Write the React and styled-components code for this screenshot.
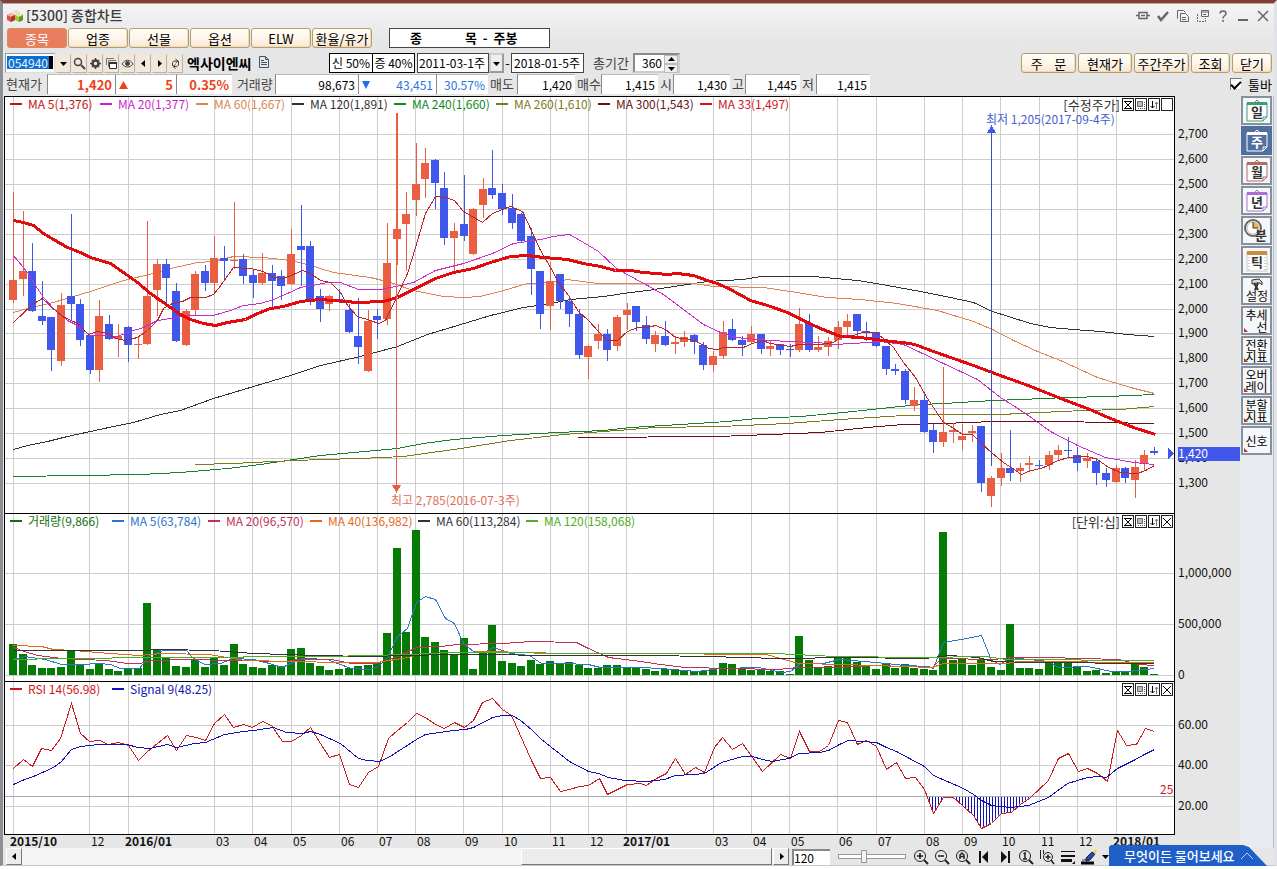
import React from 'react';
import styled, { createGlobalStyle, css } from 'styled-components';

/* ---------- data ---------- */

const FIRST_X = 13;
const LAST_X = 1154;
const COUNT = 120;
const candleX = (i) => Math.round(FIRST_X + (i * (LAST_X - FIRST_X)) / (COUNT - 1));

const UP = '#ea5f42';
const DOWN = '#3f57ea';
const GRID = '#cdcdcd';

/* direction, body top, body bottom, wick top, wick bottom */
const CANDLES = `u280,300,192,302 u271,279,211,295 d271,311,243,311 d316,321,281,324 d317,350,317,370 u305,361,293,365
d296,304,214,320 d304,340,299,345 d335,370,335,373 u316,370,300,381 d324,339,315,339 u336,339,324,356 d327,345,326,361
u344,345,336,358 u296,344,221,344 u264,290,259,315 d264,278,259,302 d291,341,283,341 u311,345,309,345 u274,310,271,315
d271,283,265,290 u258,283,236,292 d258,261,246,280 u260,261,202,268 d259,276,254,283 d275,283,270,297 u273,283,253,284
d273,281,265,308 d276,286,270,299 u254,284,229,284 d246,250,205,285 d246,299,241,304 d296,309,289,321 u296,304,295,310
d299,300,289,302 d310,332,304,332 d336,347,298,363 u321,371,310,371 d316,320,309,338 u263,319,223,324 u229,239,113,264
u214,224,192,270 u184,200,143,215 u163,179,148,197 d160,183,159,208 d188,238,172,244 u231,238,223,270 d224,236,175,240
u209,254,208,254 u189,205,178,217 d188,195,150,198 d193,209,184,214 d208,223,194,228 d214,241,213,241 d236,269,228,294
d271,314,271,328 u281,306,262,329 d274,301,274,308 d301,314,296,326 d314,355,309,358 u346,357,345,378 u334,341,324,348
d334,350,329,360 u317,346,315,350 u310,315,303,329 d306,322,306,330 d325,339,316,343 u335,344,331,351 d336,345,321,345
u342,344,336,353 u337,342,331,346 d335,342,334,353 d345,365,342,369 u356,365,351,371 u332,356,321,358 d329,340,319,340
d340,345,336,355 u334,342,326,342 d334,349,334,353 u346,349,340,355 d344,350,344,354 d349,350,344,356 u324,350,308,351
d323,350,314,351 u347,350,336,351 u341,347,337,355 u327,340,321,348 u321,327,314,334 d314,331,314,335 d331,332,322,340
d332,346,332,346 d346,369,346,374 d369,371,364,374 d371,400,369,403 u400,406,387,410 d400,432,392,432 d430,442,424,452
u432,442,367,446 u430,432,423,442 u436,440,424,449 u431,433,425,441 d426,483,426,491 u478,496,476,506 u468,478,453,485
d468,473,430,480 u468,471,463,481 u463,465,456,470 d465,466,460,468 u455,465,451,469 u450,455,445,460 d450,451,437,457
d455,463,447,470 u458,461,453,467 d461,473,458,484 d473,480,468,486 u468,482,465,482 d468,478,467,482 u467,480,460,497
u455,463,450,469 d451,453,447,454`
  .split(/\s+/)
  .map((t) => [t[0] === 'u', ...t.slice(1).split(',').map(Number)]);

const VOLUME_TOPS = [
  644, 654, 665, 668, 668, 667, 650, 665, 669, 664, 669, 671, 669, 668, 603, 650, 658, 666, 667, 660, 667, 657, 665, 644,
  664, 667, 668, 665, 666, 649, 648, 663, 666, 670, 669, 668, 666, 665, 662, 633, 548, 632, 530, 637, 642, 650, 654, 638,
  669, 653, 625, 661, 663, 666, 660, 664, 661, 664, 662, 665, 668, 668, 665, 665, 668, 668, 669, 671, 669, 669, 671, 671,
  671, 669, 663, 664, 669, 670, 670, 671, 671, 674, 636, 660, 668, 666, 657, 656, 662, 666, 669, 663, 668, 664, 668, 669,
  670, 532, 660, 659, 665, 659, 667, 670, 624, 668, 668, 669, 662, 663, 662, 667, 671, 670, 673, 671, 671, 662, 667, 674,
];

const PRICE_LINES = [
  {
    color: '#187f2a',
    points:
      '13,476 80,475 140,474 180,472 227,468 260,464 293,459 320,455 353,452 397,448 423,443 453,439 503,435 557,432 603,430 630,427 680,424 727,421 757,418 800,416 843,412 890,407 920,404 943,403 993,400 1020,399 1067,397 1107,396 1154,394',
  },
  {
    color: '#7d7a1a',
    points:
      '195,464 233,463 273,461 320,459 360,458 403,456 460,448 510,440 563,434 630,429 653,427 720,426 787,423 840,419 903,415 940,414 960,414 1000,414 1040,412 1083,410 1120,409 1154,406',
  },
  {
    color: '#6d0f14',
    points:
      '578,437 717,436 770,434 820,432 867,427 903,424 943,423 993,421 1067,421 1100,422 1154,423',
  },
  {
    color: '#333333',
    points:
      '13,449 27,445 47,441 67,436 90,431 113,426 133,422 160,414 180,410 213,398 253,386 290,375 320,365 360,356 397,346 427,334 457,325 490,315 523,307 550,303 570,299 603,296 630,292 647,290 687,284 707,281 743,279 760,276 813,276 857,280 887,285 920,291 950,297 973,302 992,311 1030,323 1050,327 1073,329 1100,331 1127,334 1154,336',
  },
  {
    color: '#dd8452',
    points:
      '13,312 27,308 53,302 90,291 123,280 153,273 170,268 197,262 213,261 233,256 263,257 290,260 307,264 320,268 333,272 370,277 390,282 413,290 423,292 443,296 463,297 480,296 503,290 527,283 550,282 567,279 597,283 630,283 693,283 713,286 763,287 790,291 827,297 860,299 897,303 937,310 973,321 992,329 1013,340 1037,351 1060,360 1097,377 1130,387 1154,393',
  },
  {
    color: '#cc2bcc',
    points:
      '13,255 27,272 35,285 43,297 53,308 67,320 77,325 90,335 103,335 117,336 130,331 143,327 157,320 170,318 190,315 213,315 230,310 243,305 260,303 273,299 287,293 300,287 317,284 327,282 340,282 358,289 380,289 400,285 413,282 435,270 463,263 492,253 513,243 540,239 553,236 569,234 583,242 598,251 615,267 623,272 647,285 663,294 683,309 703,324 720,332 735,337 757,339 787,341 817,342 833,344 853,343 880,341 903,344 920,352 943,363 977,379 1000,397 1025,413 1050,431 1077,445 1105,457 1133,462 1154,464',
  },
  {
    color: '#e3090d',
    width: 3,
    points:
      '13,220 23,222 33,225 43,233 53,239 67,247 80,252 90,257 110,263 123,272 137,282 150,293 170,307 180,314 190,319 203,323 215,325 227,322 245,319 257,313 270,308 283,306 300,301 320,299 333,300 357,302 383,301 397,297 413,289 435,278 453,272 473,268 490,262 510,256 527,255 543,257 567,259 583,263 600,266 615,270 630,270 643,272 667,274 677,273 693,275 707,280 717,283 730,289 750,300 767,305 787,312 807,322 820,328 840,336 860,337 883,340 910,343 917,345 933,351 973,365 997,374 1033,387 1060,398 1087,408 1110,418 1133,427 1155,434',
  },
  {
    color: '#bb2326',
    points:
      '13,322 32,304 42,298 50,306 62,316 75,322 80,326 88,334 97,331 107,333 115,338 125,340 137,337 147,330 157,320 163,308 172,303 182,301 190,297 205,297 213,294 218,288 233,267 250,268 263,271 273,277 283,278 293,274 302,270 310,273 320,280 330,282 340,292 347,305 357,316 370,320 378,323 385,320 397,295 407,273 415,247 425,213 435,196 445,197 454,200 463,211 470,215 482,222 492,213 502,209 510,206 522,211 530,228 540,250 550,267 558,282 568,295 578,311 588,320 598,331 607,340 617,340 627,331 637,327 647,327 655,325 665,329 675,337 690,339 698,342 708,348 717,349 723,347 743,347 752,343 762,340 770,343 790,346 798,344 820,344 833,342 842,335 853,335 862,332 875,332 883,338 893,347 903,362 915,377 927,398 935,410 943,422 952,427 962,434 972,434 980,442 992,453 1003,462 1012,468 1021,474 1028,471 1043,467 1058,460 1068,457 1087,456 1097,459 1108,467 1120,472 1137,473 1145,470 1154,465',
  },
];

const VOLUME_LINES = [
  {
    color: '#2a74cc',
    points:
      '13,659 24,656 45,659 61,664 82,664 98,663 110,664 120,668 139,668 149,655 163,650 186,650 192,657 204,664 220,663 233,658 253,659 269,663 282,667 298,659 327,659 337,663 351,668 369,669 378,666 387,657 397,636 407,628 416,602 425,596 435,599 445,618 454,623 463,643 473,651 484,652 493,647 510,653 529,655 541,663 563,663 588,664 600,667 640,667 660,668 697,671 721,668 758,667 782,672 790,671 800,663 823,663 839,659 876,662 904,665 928,666 933,668 943,642 961,639 981,635 991,660 1000,664 1010,657 1028,659 1048,661 1058,667 1087,666 1111,671 1128,671 1154,668',
  },
  {
    color: '#c22f58',
    points:
      '13,647 24,651 37,655 61,658 106,660 127,663 139,663 153,660 184,659 286,661 302,658 331,659 351,663 376,663 392,658 404,653 416,647 441,646 457,644 502,643 531,641 576,642 588,648 608,657 640,661 660,664 685,667 778,669 798,667 835,667 876,665 932,667 941,658 993,659 1010,657 1046,657 1119,659 1138,664 1154,665',
  },
  {
    color: '#e5691b',
    points:
      '13,645 41,646 53,649 73,650 110,653 139,655 163,653 208,654 245,660 339,662 376,662 408,657 420,653 494,651 547,653 640,653 766,654 798,663 843,664 932,667 943,663 1006,663 1018,661 1154,662',
  },
  {
    color: '#333333',
    points:
      '13,650 139,650 163,649 212,650 253,653 318,655 367,656 449,654 584,655 640,655 717,656 733,657 786,658 843,657 924,658 949,655 977,657 993,661 1034,662 1154,663',
  },
  {
    color: '#4cae22',
    points: '13,659 61,658 163,657 327,656 408,654 449,652 640,653 774,653 835,656 920,657 985,656 1006,659 1154,660',
  },
];

const RSI_POINTS =
  '13,768 23,759 32,766 41,748 51,750 60,738 71,703 80,733 89,741 99,740 108,744 118,742 128,745 138,760 147,751 157,743 167,735 176,750 186,735 196,737 205,740 214,723 224,714 233,727 243,724 252,727 262,721 271,725 282,741 291,741 301,735 310,727 320,743 329,757 339,754 349,784 358,787 368,772 378,766 388,738 397,730 407,722 416,713 425,717 435,724 444,728 454,722 464,727 473,720 482,702 492,698 502,709 511,715 531,760 540,778 550,777 560,791 569,789 579,786 588,785 599,778 607,794 627,784 640,783 646,785 656,778 666,773 675,758 685,774 695,767 704,772 714,747 722,737 732,749 742,743 752,757 762,771 780,754 790,758 799,731 809,751 819,751 828,745 838,720 847,722 857,744 866,740 876,746 886,769 896,762 905,778 915,777 924,789 933,813 943,797 953,797 963,806 973,815 981,828 991,823 1001,813 1011,812 1020,804 1029,798 1048,780 1058,758 1068,753 1078,771 1087,768 1097,773 1107,781 1117,730 1126,745 1136,744 1145,728 1154,731';
const SIGNAL_POINTS =
  '13,784 24,779 33,776 53,767 61,761 71,749 80,746 98,744 127,744 137,747 149,748 167,744 176,747 194,743 205,742 224,734 243,731 253,730 273,727 286,732 302,733 310,731 320,734 331,739 340,743 358,758 367,760 379,761 388,757 416,739 425,734 453,730 465,729 473,727 492,717 502,715 512,715 520,720 531,729 541,739 569,761 588,771 598,773 608,777 624,780 646,781 664,779 675,775 693,774 704,773 721,762 742,756 752,756 762,759 772,761 788,758 799,753 819,752 828,750 839,744 848,740 876,742 886,747 896,751 924,766 933,775 963,788 973,794 981,800 991,805 1010,807 1028,805 1048,797 1067,783 1087,777 1099,776 1106,777 1117,768 1135,759 1144,754 1154,749';
const OVERSOLD_POINTS =
  '928,797 933,813 943,798 953,798 963,806 973,815 981,828 991,823 1001,813 1011,812 1020,804 1031,797';
const OVERSOLD_BARS = Array.from({ length: 34 }, (_, k) => 929 + k * 3);

const MONTHS = [
  [13, '2015/10', true], [89, '12'], [128, '2016/01', true], [214, '03'], [252, '04'], [291, '05'], [339, '06'],
  [377, '07'], [415, '08'], [463, '09'], [502, '10'], [550, '11'], [588, '12'], [626, '2017/01', true], [713, '03'],
  [751, '04'], [789, '05'], [837, '06'], [876, '07'], [924, '08'], [962, '09'], [1000, '10'], [1039, '11'],
  [1077, '12'], [1116, '2018/01', true],
];

const PRICE_TICKS = Array.from({ length: 15 }, (_, k) => {
  const price = 2700 - k * 100;
  return [Math.round(134 + k * 24.93), price.toLocaleString('en-US')];
});

/* ---------- global ---------- */

const FONT = '"Noto Sans CJK KR", sans-serif';

const GlobalStyle = createGlobalStyle`
  * { box-sizing: border-box; }
  body { margin: 0; background: #fff; font: 13px/16px ${FONT}; color: #000; }
  button, input, select { font: inherit; color: inherit; margin: 0; padding: 0; border-radius: 0; }
  button { cursor: pointer; white-space: pre; }
`;

/* ---------- window frame ---------- */

const Window = styled.div`
  min-width: 1240px;
  background: linear-gradient(#f4f4f4, #e6e6e6 40px);
  border-top: 3px solid #7c3f45;
  border-left: 3px solid #8c8f94;
  border-right: 3px solid #dfe3e8;
  border-bottom: 1px solid #c4c9d0;
  box-shadow: inset 0 1px #c9a85c;
  padding-left: 1px;
  position: relative;
`;

const TitleBar = styled.header`
  display: flex;
  align-items: center;
  gap: 3px;
  height: 25px;
  padding: 1px 3px 0;
`;

const Title = styled.h1`
  margin: 0;
  flex: 1;
  font-size: 14px;
  font-weight: 500;
  line-height: 20px;
  padding-bottom: 3px;
  color: #3c3c3c;
`;

const TitleTools = styled.div`
  display: flex;
  gap: 4px;
`;

const IconButton = styled.button`
  display: flex;
  align-items: center;
  justify-content: center;
  width: 16px;
  height: 16px;
  border: 0;
  background: none;
  color: #666;
`;

/* ---------- toolbar rows ---------- */

const TabRow = styled.nav`
  display: flex;
  gap: 1px;
  height: 20px;
  padding-left: 3px;
`;

const creamFace = css`
  border: 1px solid #b29f6e;
  border-radius: 3px;
  background: linear-gradient(#fffdf9, #fdf6ea 50%, #f8e6d3);
  box-shadow: inset -1px -1px #f2d9b8;
  line-height: 17px;
`;

const Tab = styled.button`
  ${creamFace}
  width: 60px;
  ${(p) =>
    p.$active &&
    css`
      background: #e97d5f;
      border-color: #e08b4e;
      box-shadow: none;
      color: #fff;
    `}
`;

const ModeBox = styled.output`
  display: flex;
  width: 161px;
  margin-left: 16px;
  padding-left: 20px;
  border: 1px solid #444;
  background: #fff;
  font-weight: 700;
  line-height: 17px;
  white-space: pre;
  span:first-child {
    width: 55px;
  }
`;

const SearchRow = styled.div`
  display: flex;
  align-items: center;
  height: 20px;
  margin-top: 5px;
  padding-left: 1px;
`;

const CodeInput = styled.input`
  width: 50px;
  height: 20px;
  padding: 0 2px 2px;
  border: 1px solid #999;
  border-right-color: #ddd;
  border-bottom-color: #ddd;
  font-size: 12px;
  color: #e8f3ff;
  background:
    linear-gradient(#0a6fce, #0a6fce) 1px 2px / 42px 13px no-repeat,
    linear-gradient(#000, #000) 43px 2px / 4px 13px no-repeat,
    #fff;
`;

const ToolButton = styled.button`
  display: flex;
  align-items: center;
  justify-content: center;
  width: 15px;
  height: 19px;
  margin-left: 1px;
  border: 1px solid #bcb0a3;
  border-top-color: #f0e8df;
  border-left-color: #f0e8df;
  background: #f3e7da;
  color: #444;
`;

const StockName = styled.strong`
  width: 67px;
  margin-left: 4px;
  font-size: 14px;
  font-weight: 700;
  white-space: nowrap;
`;

const DocLink = styled.button`
  width: 20px;
  height: 18px;
  border: 0;
  background: none;
  color: #555;
`;

const RatePair = styled.div`
  display: flex;
  margin-left: 55px;
  border: 1px solid #000;
  background: #fff;
`;

const Rate = styled.output`
  width: 42px;
  height: 18px;
  font-size: 12px;
  line-height: 17px;
  text-align: center;
  white-space: nowrap;
  & + & {
    border-left: 1px solid #000;
  }
`;

const DateSelect = styled.label`
  position: relative;
  display: flex;
  width: 87px;
  height: 20px;
  margin-left: 2px;
  select {
    width: 72px;
    appearance: none;
    border: 1px solid #444;
    background: #fff;
    padding-left: 1px;
    font-size: 12px;
  }
  span {
    display: flex;
    align-items: center;
    justify-content: center;
    width: 15px;
    border: 2px solid #9a9a9a;
    border-top-color: #ccc;
    border-left-color: #ccc;
    background: #eee;
    pointer-events: none;
  }
`;

const DateInput = styled.input`
  width: 73px;
  height: 20px;
  border: 1px solid #444;
  background: #fff;
  padding: 0 0 1px 2px;
  font-size: 12px;
`;

const Dash = styled.span`
  width: 7px;
  text-align: center;
`;

const Spin = styled.label`
  display: flex;
  align-items: center;
  margin-left: 9px;
  color: #444;
  > span {
    width: 40px;
  }
`;

const SpinBox = styled.div`
  display: flex;
  width: 47px;
  height: 20px;
  border: 2px solid #8a8a8a;
  border-right-color: #ccc;
  border-bottom-color: #ccc;
  background: #fff;
  color: #000;
  input {
    width: 29px;
    border: 0;
    background: none;
    text-align: right;
    padding: 0 2px 1px 0;
    font-size: 12px;
  }
`;

const SpinArrows = styled.div`
  display: flex;
  flex-direction: column;
  button {
    flex: 1;
    width: 14px;
    border: 1px solid #bbb;
    background: #eee;
    display: flex;
    align-items: center;
    justify-content: center;
  }
`;

const Actions = styled.div`
  display: flex;
  gap: 2px;
  margin-left: auto;
  padding-right: 2px;
`;

const ActionButton = styled.button`
  ${creamFace}
  width: ${(p) => p.$w}px;
  height: 20px;
`;

/* ---------- quote row ---------- */

const QuoteRow = styled.div`
  display: flex;
  height: 20px;
  margin-top: 1px;
  line-height: 19px;
`;

const QuoteLabel = styled.span`
  width: ${(p) => p.$w}px;
  padding-left: 2px;
  color: #444;
  white-space: nowrap;
`;

const QuoteCell = styled.output`
  display: flex;
  align-items: center;
  justify-content: flex-end;
  width: ${(p) => p.$w}px;
  border-left: 1px solid #888;
  border-top: 1px solid #bbb;
  background: #fff;
  padding-right: 3px;
  font-size: ${(p) => (p.$bold ? 13 : 12)}px;
  font-weight: ${(p) => (p.$bold ? 700 : 400)};
  color: ${(p) => p.$c || '#000'};
  svg {
    margin: 0 auto 0 3px;
  }
`;

const BarToggle = styled.label`
  display: flex;
  align-items: center;
  gap: 6px;
  margin-left: auto;
  padding-right: 2px;
  input {
    appearance: none;
    width: 12px;
    height: 12px;
    border: 1px solid #777;
    border-right-color: #ddd;
    border-bottom-color: #ddd;
    background: #fff;
    display: grid;
    place-items: center;
  }
  input:checked::after {
    content: '';
    width: 4px;
    height: 8px;
    margin-bottom: 2px;
    border: solid #000;
    border-width: 0 2px 2px 0;
    transform: rotate(45deg);
  }
`;

/* ---------- charts ---------- */

const Body = styled.div`
  display: flex;
  margin-top: 2px;
`;

const Charts = styled.main`
  flex: 1;
  min-width: 0;
`;

const Panel = styled.section`
  position: relative;
  svg.plot {
    display: block;
    width: 100%;
    height: ${(p) => p.$h}px;
  }
`;

const Legend = styled.ul`
  position: absolute;
  top: 0;
  left: 6px;
  display: flex;
  margin: 0;
  padding: 0;
  list-style: none;
  font-size: 12px;
  line-height: 15px;
`;

const LegendItem = styled.li`
  display: flex;
  align-items: center;
  gap: 6px;
  width: ${(p) => p.$w}px;
  color: ${(p) => p.$c};
  white-space: pre;
  &::before {
    content: '';
    width: 12px;
    height: 2px;
    background: currentColor;
  }
`;

const PanelTools = styled.div`
  position: absolute;
  top: 2px;
  right: 67px;
  display: flex;
  gap: 1px;
  line-height: 13px;
  span {
    margin-right: 1px;
    color: #333;
  }
`;

const PanelButton = styled.button`
  display: flex;
  align-items: center;
  justify-content: center;
  width: 12px;
  height: 13px;
  border: 1px solid #222;
  background: #fff;
`;

const Axis = styled.svg`
  display: block;
  width: 100%;
  height: 13px;
  overflow: visible;
`;

const AxisText = styled.text`
  font: ${(p) => (p.$bold ? 700 : 400)} 12px ${FONT};
  fill: ${(p) => p.$c || '#111'};
`;

/* ---------- bottom row ---------- */

const BottomRow = styled.div`
  display: flex;
  align-items: center;
  height: 17px;
  padding-left: 2px;
`;

const ScrollTrack = styled.div`
  display: flex;
  flex: 1;
  height: 17px;
  background: #f5f5f5;
`;

const Bevel = styled.button`
  display: flex;
  align-items: center;
  justify-content: center;
  width: 16px;
  border: 1px solid #fff;
  border-right-color: #777;
  border-bottom-color: #777;
  background: #ececec;
`;

const TrackSpace = styled.div`
  flex: ${(p) => p.$f};
`;

const Thumb = styled(Bevel)`
  flex: 250;
`;

const CountInput = styled.input`
  width: 38px;
  height: 16px;
  margin-left: 3px;
  border: 2px solid #888;
  border-right: 0;
  border-bottom: 0;
  background: #fff;
  font-size: 12px;
  line-height: 14px;
`;

const Zoom = styled.input`
  appearance: none;
  width: 68px;
  height: 14px;
  margin-left: 8px;
  background: none;
  &::-webkit-slider-runnable-track {
    height: 5px;
    border: 1px solid #999;
    background: #fff;
  }
  &::-webkit-slider-thumb {
    appearance: none;
    width: 6px;
    height: 13px;
    margin-top: -5px;
    border: 1px solid #999;
    background: #f2f2f2;
  }
`;

const ZoomTools = styled.div`
  display: flex;
  align-items: center;
  gap: 5px;
  margin-left: 7px;
  width: 361px;
`;

/* ---------- sidebar ---------- */

const Sidebar = styled.aside`
  width: 34px;
  padding-left: 1px;
  background: #e8ebef;
  border-right: 1px solid #b9bec6;
`;

const SideButton = styled.button`
  position: relative;
  display: flex;
  align-items: center;
  justify-content: center;
  width: 31px;
  height: 29px;
  margin-bottom: 1px;
  border: 2px solid ${(p) => (p.$active ? '#4f6f9d' : '#87919d')};
  background: ${(p) => (p.$active ? '#52709f' : '#f6f7f8')};
  font-size: 12px;
  line-height: 12px;
  text-align: right;
  white-space: pre-line;
  ${(p) =>
    p.$corner &&
    css`
      &::after {
        content: '';
        position: absolute;
        left: 1px;
        bottom: 1px;
        border: 2px solid transparent;
        border-left-color: #a33;
        border-bottom-color: #a33;
      }
    `}
`;

const Banner = styled.button`
  position: absolute;
  right: 6px;
  bottom: -2px;
  display: flex;
  align-items: center;
  gap: 5px;
  width: 159px;
  height: 22px;
  padding-left: 15px;
  border: 0;
  background: #1f60c8;
  clip-path: polygon(0 2px, 2px 0, 134px 0, 140px 2px, 100% 100%, 0 100%);
  color: #fff;
  font-weight: 500;
`;

/* ---------- icons ---------- */

const Glyph = ({ size = 14, children, ...rest }) => (
  <svg width={size} height={size} viewBox={`0 0 ${size} ${size}`} fill="none" stroke="currentColor" aria-hidden="true" {...rest}>
    {children}
  </svg>
);

const Triangle = ({ dir, color = '#000' }) => {
  const shapes = {
    down: 'M0 2h7L3.5 6z',
    up: 'M0 5h7L3.5 1z',
    left: 'M5 0v7L1 3.5z',
    right: 'M2 0v7l4-3.5z',
  };
  return (
    <svg width="7" height="7" viewBox="0 0 7 7" aria-hidden="true">
      <path d={shapes[dir]} fill={color} />
    </svg>
  );
};

const Logo = () => (
  <svg width="16" height="14" viewBox="0 0 16 14" aria-hidden="true">
    <path d="M5 3l4-2 4 2-4 2z" fill="#f2d9c9" />
    <path d="M0 6l4-2 4 2v5l-4 2-4-2z" fill="#e0504a" />
    <path d="M0 6l4-2 4 2-4 2z" fill="#f6b7b0" />
    <path d="M4 8l4-2v5l-4 2z" fill="#b92f33" />
    <path d="M8 6l4-2 4 2v5l-4 2-4-2z" fill="#9dc83a" />
    <path d="M8 6l4-2 4 2-4 2z" fill="#dcefb0" />
    <path d="M12 8l4-2v5l-4 2z" fill="#5c9927" />
  </svg>
);

const Magnifier = ({ children }) => (
  <Glyph size={16}>
    <circle cx="7" cy="7" r="5.5" stroke="#222" />
    <path d="M11 11l4 4" stroke="#222" strokeWidth="2" />
    {children}
  </Glyph>
);

const CalendarIcon = ({ color, label, active }) => (
  <svg width="24" height="24" viewBox="0 0 24 24" aria-hidden="true">
    <path d="M2 4h20v14l-4 4H2z" fill={active ? '#52709f' : '#fff'} stroke={color} />
    <path d="M2 3h20v3H2z" fill={color} />
    <path d="M10 3l2-2 2 2" fill="none" stroke={color} />
    <path d="M22 18h-4v4" fill="none" stroke={color} />
    <text x="12" y="18" textAnchor="middle" fontSize="13" fontWeight="700" fill={active ? '#fff' : '#333'} fontFamily={FONT}>
      {label}
    </text>
  </svg>
);

const ClockIcon = () => (
  <svg width="27" height="25" viewBox="0 0 27 25" aria-hidden="true">
    <circle cx="10" cy="10" r="8" fill="#fff" stroke="#666" strokeWidth="2" />
    <circle cx="10" cy="10" r="6" fill="none" stroke="#bbb" />
    <path d="M10 10V4a6 6 0 0 1 6 6z" fill="#eeb44f" />
    <path d="M10 4v6h5" fill="none" stroke="#333" />
    <text x="18" y="22" textAnchor="middle" fontSize="13" fontWeight="700" fill="#333" fontFamily={FONT}>
      분
    </text>
  </svg>
);

const TickIcon = () => (
  <svg width="24" height="24" viewBox="0 0 24 24" aria-hidden="true">
    <path d="M2 3h20v19H2z" fill="#fff" stroke="#c9c9c9" />
    <path d="M2 2h20v4H2z" fill="#d08d41" />
    <path d="M4 8v13M20 8v13" stroke="#999" strokeDasharray="1 2" />
    <text x="12" y="18" textAnchor="middle" fontSize="13" fontWeight="700" fill="#333" fontFamily={FONT}>
      틱
    </text>
  </svg>
);

const HammerIcon = () => (
  <svg width="26" height="25" viewBox="0 0 26 25" aria-hidden="true">
    <path d="M8 2l7-1 3 3v3l-2-2h-3l-5 1z" fill="#ddd" stroke="#333" />
    <path d="M10 5l4 7M14 5l-3 7" stroke="#333" strokeWidth="2" />
    <text x="13" y="23" textAnchor="middle" fontSize="12" fill="#111" fontFamily={FONT}>
      설정
    </text>
  </svg>
);

/* ---------- chart pieces ---------- */

const Verticals = ({ top, bottom }) =>
  MONTHS.map(([x]) => <rect key={x} x={x} y={top} width="1" height={bottom - top} fill={GRID} />);

const Horizontals = ({ ys }) => ys.map((y) => <rect key={y} x="5" y={y} width="1169" height="1" fill={GRID} />);

const Lines = ({ items }) =>
  items.map((l, i) => (
    <polyline key={i} points={l.points} fill="none" stroke={l.color} strokeWidth={l.width || 1} transform="translate(0.5 0.5)" />
  ));

const Frame = ({ top, height }) => (
  <>
    <rect x="4" y={top} width="1171" height={height} fill="#fff" />
    <path d={`M4.5 ${top + height}V${top + 0.5}H1174.5V${top + height}`} fill="none" stroke="#000" />
  </>
);

const Plot = ({ top, height, children }) => (
  <svg
    className="plot"
    viewBox={`4 ${top} 1236 ${height}`}
    preserveAspectRatio="none"
    shapeRendering="crispEdges"
  >
    {children}
  </svg>
);

const Tools = ({ label, last = true }) => (
  <PanelTools>
    {label && <span>{label}</span>}
    <PanelButton aria-label="압축">
      <Glyph size={10}>
        <path d="M1 1.5h8M1 8.5h8M2 2l3 3 3-3M2 8l3-3 3 3" />
      </Glyph>
    </PanelButton>
    <PanelButton aria-label="최대화">
      <Glyph size={10}>
        <path d="M1.5 1.5h5v5h-5z" fill="#bbb" stroke="#666" />
        <path d="M8.5 2v7M2 8.5h7" stroke="#555" strokeDasharray="1 1" />
      </Glyph>
    </PanelButton>
    <PanelButton aria-label="이동">
      <Glyph size={10}>
        <path d="M3.5 1v7M1.5 6l2 2 2-2" />
        <path d="M7.5 9V2M6 4l1.5-2L9 4" stroke="#777" />
      </Glyph>
    </PanelButton>
    <PanelButton aria-label="닫기">
      {last && (
        <Glyph size={10}>
          <path d="M1 1l8 8M9 1L1 9" />
        </Glyph>
      )}
    </PanelButton>
  </PanelTools>
);

const PricePanel = () => (
  <Panel $h={417}>
    <Plot top={96} height={417}>
      <Frame top={96} height={417} />
      <Verticals top={97} bottom={513} />
      <Horizontals ys={PRICE_TICKS.map((t) => t[0])} />
      <Lines items={PRICE_LINES.slice(0, 5)} />
      {CANDLES.map(([up, top, bottom, high, low], i) => (
        <g key={i} fill={up ? UP : DOWN}>
          <rect x={candleX(i)} y={high} width="1" height={low - high + 1} />
          <rect x={candleX(i) - 4} y={top} width="8" height={Math.max(1, bottom - top)} />
        </g>
      ))}
      <Lines items={PRICE_LINES.slice(5)} />
      <rect x="396" y="113" width="1" height="374" fill={UP} />
      <path d="M392 485h9l-4.5 8z" fill={UP} />
      <rect x="991" y="130" width="1" height="336" fill="#3a50b8" />
      <path d="M987 133h9l-4.5-8z" fill={DOWN} />
      <path d="M1168 448v11l6-5.5z" fill={DOWN} />
      {PRICE_TICKS.map(([y, t]) => (
        <AxisText key={t} x="1178" y={y + 4}>
          {t}
        </AxisText>
      ))}
      <rect x="1178" y="447" width="62" height="14" fill={DOWN} />
      <AxisText x="1178" y="458" $c="#fff">
        1,420
      </AxisText>
      <AxisText x="986" y="124" $c="#4460cf">
        최저 1,205(2017-09-4주)
      </AxisText>
      <AxisText x="391" y="505" $c="#de6f57">
        최고 2,785(2016-07-3주)
      </AxisText>
    </Plot>
    <Legend>
      <LegendItem $w={90} $c="#c11317">MA 5(1,376)</LegendItem>
      <LegendItem $w={96} $c="#cc1fd0">MA 20(1,377)</LegendItem>
      <LegendItem $w={96} $c="#dd8452">MA 60(1,667)</LegendItem>
      <LegendItem $w={102} $c="#333">MA 120(1,891)</LegendItem>
      <LegendItem $w={102} $c="#0f8a22">MA 240(1,660)</LegendItem>
      <LegendItem $w={102} $c="#7d7a1a">MA 260(1,610)</LegendItem>
      <LegendItem $w={102} $c="#6d0f14">MA 300(1,543)</LegendItem>
      <LegendItem $w={96} $c="#d01518">MA 33(1,497)</LegendItem>
    </Legend>
    <Tools label="[수정주가]" last={false} />
  </Panel>
);

const VolumePanel = () => (
  <Panel $h={168}>
    <Plot top={513} height={168}>
      <Frame top={513} height={168} />
      <Verticals top={514} bottom={681} />
      <Horizontals ys={[573, 624, 675]} />
      {VOLUME_TOPS.map((y, i) => (
        <rect key={i} x={candleX(i) - 4} y={y} width="8" height={675 - y} fill="#057a05" />
      ))}
      <Lines items={VOLUME_LINES} />
      {[[573, '1,000,000'], [624, '500,000'], [675, '0']].map(([y, t]) => (
        <AxisText key={t} x="1178" y={y + 4}>
          {t}
        </AxisText>
      ))}
    </Plot>
    <Legend>
      <LegendItem $w={102} $c="#107010">거래량(9,866)</LegendItem>
      <LegendItem $w={96} $c="#2a74cc">MA 5(63,784)</LegendItem>
      <LegendItem $w={102} $c="#c22f58">MA 20(96,570)</LegendItem>
      <LegendItem $w={108} $c="#e5691b">MA 40(136,982)</LegendItem>
      <LegendItem $w={108} $c="#333">MA 60(113,284)</LegendItem>
      <LegendItem $w={114} $c="#4cae22">MA 120(158,068)</LegendItem>
    </Legend>
    <Tools label="[단위:십]" />
  </Panel>
);

const RsiPanel = () => (
  <Panel $h={154}>
    <Plot top={681} height={154}>
      <defs>
        <clipPath id="oversold">
          <polygon points={OVERSOLD_POINTS} />
        </clipPath>
      </defs>
      <Frame top={681} height={154} />
      <Verticals top={682} bottom={834} />
      <Horizontals ys={[725, 765, 806]} />
      <rect x="5" y="796" width="1169" height="1" fill="#a9a9a9" />
      <g clipPath="url(#oversold)" fill="#1212b4">
        {OVERSOLD_BARS.map((x) => (
          <rect key={x} x={x} y="797" width="1" height="32" />
        ))}
      </g>
      <Lines items={[{ color: '#c91c1f', points: RSI_POINTS }, { color: '#1212b4', points: SIGNAL_POINTS }]} />
      <path d="M4 834.5H1175" stroke="#000" />
      {[[725, '60.00'], [765, '40.00'], [806, '20.00']].map(([y, t]) => (
        <AxisText key={t} x="1178" y={y + 4}>
          {t}
        </AxisText>
      ))}
      <AxisText x="1160" y="794" $c="#c91c1f">
        25
      </AxisText>
    </Plot>
    <Legend>
      <LegendItem $w={102} $c="#d01518">RSI 14(56.98)</LegendItem>
      <LegendItem $w={120} $c="#1212b4">Signal 9(48.25)</LegendItem>
    </Legend>
    <Tools />
  </Panel>
);

const MonthAxis = () => (
  <Axis viewBox="4 835 1236 13" preserveAspectRatio="none">
    {MONTHS.map(([x, t, bold]) => (
      <AxisText key={x} x={bold ? x - 3 : x + 2} y="846" $bold={bold}>
        {t}
      </AxisText>
    ))}
  </Axis>
);

const SIDE = [
  { name: '일', icon: <CalendarIcon color="#3f9b78" label="일" /> },
  { name: '주', icon: <CalendarIcon color="#fff" label="주" active />, active: true },
  { name: '월', icon: <CalendarIcon color="#b26a64" label="월" /> },
  { name: '년', icon: <CalendarIcon color="#a86fd8" label="년" /> },
  { name: '분', icon: <ClockIcon /> },
  { name: '틱', icon: <TickIcon /> },
  { name: '설정', icon: <HammerIcon /> },
  { name: '추세선', text: '추세\n선' },
  { name: '전환지표', text: '전환\n지표' },
  { name: '오버레이', text: '오버\n레이' },
  { name: '분할지표', text: '분할\n지표' },
  { name: '신호', text: '신호' },
];

export default function App() {
  return (
    <>
      <GlobalStyle />
      <Window>
        <TitleBar>
          <Logo />
          <Title>[5300] 종합차트</Title>
          <TitleTools>
            <IconButton aria-label="연결">
              <Glyph size={16}>
                <path d="M4 4.5h8v6H4zM1 7.5h3M12 7.5h3M6 7.5h4" strokeWidth="1.5" />
              </Glyph>
            </IconButton>
            <IconButton aria-label="확인">
              <Glyph>
                <path d="M2 7l3 4 7-8" strokeWidth="2.5" />
              </Glyph>
            </IconButton>
            <IconButton aria-label="복사">
              <Glyph>
                <path d="M1.5 9.5v-8h6l2 2M4.5 4.5h5l3 3v5h-8zM6 8.5h4M6 10.5h4" />
              </Glyph>
            </IconButton>
            <IconButton aria-label="분리">
              <Glyph>
                <path d="M5.5 1.5h7v6h-7zM5 3h8M7 5.5h3" />
                <path d="M1.5 5v7.5h8V9" strokeDasharray="2 1" />
              </Glyph>
            </IconButton>
            <IconButton aria-label="도움말">
              <Glyph>
                <path d="M4 4.5C4 1 10 1 10 4.5 10 7 7 6.5 7 9.5M7 11v2" strokeWidth="1.5" />
              </Glyph>
            </IconButton>
            <IconButton aria-label="최소화">
              <Glyph>
                <path d="M2 11h10" strokeWidth="2" />
              </Glyph>
            </IconButton>
            <IconButton aria-label="창 닫기">
              <Glyph>
                <path d="M2 2l10 10M12 2L2 12" strokeWidth="1.5" />
              </Glyph>
            </IconButton>
          </TitleTools>
        </TitleBar>

        <TabRow>
          {['종목', '업종', '선물', '옵션', 'ELW', '환율/유가'].map((t, i) => (
            <Tab key={t} $active={i === 0}>
              {t}
            </Tab>
          ))}
          <ModeBox>
            <span>종</span>
            <span>목  -  주봉</span>
          </ModeBox>
        </TabRow>

        <SearchRow>
          <CodeInput aria-label="종목코드" defaultValue="054940" />
          <ToolButton aria-label="목록">
            <Triangle dir="down" />
          </ToolButton>
          <ToolButton aria-label="검색">
            <Glyph size={13}>
              <circle cx="5" cy="5" r="3.5" strokeWidth="1.5" />
              <path d="M8 8l4 4" strokeWidth="2" />
            </Glyph>
          </ToolButton>
          <ToolButton aria-label="환경설정">
            <Glyph size={13}>
              <circle cx="6.5" cy="6.5" r="3" strokeWidth="2.5" />
              <path d="M6.5 1v2M6.5 10v2M1 6.5h2M10 6.5h2M3 3l1 1M9 9l1 1M10 3L9 4M4 9l-1 1" strokeWidth="1.5" />
            </Glyph>
          </ToolButton>
          <ToolButton aria-label="새 창">
            <Glyph size={13}>
              <path d="M1.5 8V1.5H9M3.5 10V3.5H11" stroke="#777" />
              <path d="M4.5 5.5h7v6h-7z" fill="#fff" stroke="#234" />
              <path d="M4 6h8" stroke="#234" strokeWidth="2" />
            </Glyph>
          </ToolButton>
          <ToolButton aria-label="관심">
            <Glyph size={13}>
              <path d="M1 7c3-5 8-5 11 0-3 4-8 4-11 0z" />
              <circle cx="6.5" cy="6.5" r="2" fill="#444" />
            </Glyph>
          </ToolButton>
          <ToolButton aria-label="이전">
            <Triangle dir="left" />
          </ToolButton>
          <ToolButton aria-label="다음">
            <Triangle dir="right" />
          </ToolButton>
          <ToolButton aria-label="순환">
            <Glyph size={11}>
              <path d="M2.5 8V4.5L4 3h3M5.5 1L8 3 5.5 5M8.500 3v4L7 8.500H4M5.500 6.500L3 8.500l2.500 2" />
            </Glyph>
          </ToolButton>
          <StockName>엑사이엔씨</StockName>
          <DocLink aria-label="기업정보">
            <Glyph size={14}>
              <path d="M2.5 1.5h6l3 3v8h-9zM8.5 1.5v3h3M4 5.5h3M4 7.5h6M4 9.5h6" stroke="#456" />
            </Glyph>
          </DocLink>
          <RatePair>
            <Rate>신 50%</Rate>
            <Rate>증 40%</Rate>
          </RatePair>
          <DateSelect>
            <select aria-label="시작일">
              <option>2011-03-1주</option>
            </select>
            <span>
              <Triangle dir="down" />
            </span>
          </DateSelect>
          <Dash>-</Dash>
          <DateInput aria-label="종료일" defaultValue="2018-01-5주" />
          <Spin>
            <span>총기간</span>
            <SpinBox>
              <input aria-label="총기간" defaultValue="360" />
              <SpinArrows>
                <button aria-label="증가">
                  <Triangle dir="up" />
                </button>
                <button aria-label="감소">
                  <Triangle dir="down" />
                </button>
              </SpinArrows>
            </SpinBox>
          </Spin>
          <Actions>
            <ActionButton $w={55}>{'주    문'}</ActionButton>
            <ActionButton $w={54}>현재가</ActionButton>
            <ActionButton $w={55}>주간주가</ActionButton>
            <ActionButton $w={39}>조회</ActionButton>
            <ActionButton $w={40}>닫기</ActionButton>
          </Actions>
        </SearchRow>

        <QuoteRow>
          <QuoteLabel $w={43}>현재가</QuoteLabel>
          <QuoteCell $w={68} $c="#ee4216" $bold>1,420</QuoteCell>
          <QuoteCell $w={61} $c="#ee4216" $bold>
            <svg width="9" height="8" viewBox="0 0 9 8" aria-hidden="true">
              <path d="M0 8h9L4.5 0z" fill="#ee4216" />
            </svg>
            5
          </QuoteCell>
          <QuoteCell $w={56} $c="#ee4216" $bold>0.35%</QuoteCell>
          <QuoteLabel $w={43}>&nbsp;거래량</QuoteLabel>
          <QuoteCell $w={83}>98,673</QuoteCell>
          <QuoteCell $w={78} $c="#2a74dd">
            <svg width="8" height="8" viewBox="0 0 8 8" aria-hidden="true">
              <path d="M0 0h8L4 8z" fill="#1d6fe8" />
            </svg>
            43,451
          </QuoteCell>
          <QuoteCell $w={52} $c="#2a74dd">30.57%</QuoteCell>
          <QuoteLabel $w={29}>매도</QuoteLabel>
          <QuoteCell $w={58}>1,420</QuoteCell>
          <QuoteLabel $w={26}>매수</QuoteLabel>
          <QuoteCell $w={57}>1,415</QuoteCell>
          <QuoteLabel $w={15}>시</QuoteLabel>
          <QuoteCell $w={57}>1,430</QuoteCell>
          <QuoteLabel $w={15}>고</QuoteLabel>
          <QuoteCell $w={55}>1,445</QuoteCell>
          <QuoteLabel $w={16}>저</QuoteLabel>
          <QuoteCell $w={54}>1,415</QuoteCell>
          <BarToggle>
            <input type="checkbox" defaultChecked />
            툴바
          </BarToggle>
        </QuoteRow>

        <Body>
          <Charts>
            <PricePanel />
            <VolumePanel />
            <RsiPanel />
            <MonthAxis />
          </Charts>
          <Sidebar>
            {SIDE.map((s) => (
              <SideButton key={s.name} aria-label={s.name} $active={s.active} $corner={Boolean(s.text)}>
                {s.icon || s.text}
              </SideButton>
            ))}
          </Sidebar>
        </Body>

        <BottomRow>
          <ScrollTrack>
            <Bevel aria-label="왼쪽으로">
              <Triangle dir="left" />
            </Bevel>
            <TrackSpace $f={501} />
            <Thumb aria-label="스크롤" />
            <TrackSpace $f={1} />
            <Bevel aria-label="오른쪽으로">
              <Triangle dir="right" />
            </Bevel>
          </ScrollTrack>
          <CountInput aria-label="봉 개수" defaultValue="120" />
          <Zoom type="range" aria-label="확대" min="0" max="100" defaultValue="37" />
          <ZoomTools>
            <IconButton aria-label="확대">
              <Magnifier>
                <path d="M4 7h6M7 4v6" stroke="#222" strokeWidth="1.5" />
              </Magnifier>
            </IconButton>
            <IconButton aria-label="축소">
              <Magnifier>
                <path d="M4 7h6" stroke="#222" strokeWidth="1.5" />
              </Magnifier>
            </IconButton>
            <IconButton aria-label="자동">
              <Magnifier>
                <path d="M5 10V6l2-2 2 2v4M5 7.5h4" stroke="#222" strokeWidth="1.5" />
              </Magnifier>
            </IconButton>
            <IconButton aria-label="처음">
              <Glyph size={16}>
                <path d="M4 2v12" stroke="#111" strokeWidth="2" />
                <path d="M12 2v12L6 8z" fill="#111" stroke="none" />
              </Glyph>
            </IconButton>
            <IconButton aria-label="끝">
              <Glyph size={16}>
                <path d="M12 2v12" stroke="#111" strokeWidth="2" />
                <path d="M4 2v12l6-6z" fill="#111" stroke="none" />
              </Glyph>
            </IconButton>
            <IconButton aria-label="원래 크기">
              <Magnifier>
                <path d="M5.5 5L7 4v6M5 10h4" stroke="#222" strokeWidth="1.5" />
              </Magnifier>
            </IconButton>
            <IconButton aria-label="구간 확대">
              <Glyph size={16}>
                <path d="M1.5 1v9M4.5 1v4" stroke="#222" />
                <circle cx="9" cy="8" r="4.5" stroke="#222" />
                <path d="M6.5 8h5M9 5.5v5M12 11l3 4" stroke="#222" strokeWidth="1.5" />
              </Glyph>
            </IconButton>
            <IconButton aria-label="선 굵기">
              <Glyph size={16}>
                <path d="M1 2.5h14" stroke="#111" />
                <path d="M1 7h14" stroke="#111" strokeWidth="2" />
                <path d="M1 11.5h11" stroke="#111" strokeWidth="3" />
                <path d="M15 12v3h-3z" fill="#111" stroke="none" />
              </Glyph>
            </IconButton>
            <IconButton aria-label="그리기">
              <Glyph size={16}>
                <path d="M5 9l6-6 3 2-5 6-4 1z" fill="#2746b8" stroke="#123" />
                <path d="M12 3l3-3 1 2-2 3z" fill="#f0d23a" stroke="none" />
                <path d="M1 11h4" stroke="#345" />
                <path d="M0 14h13" stroke="#000" strokeWidth="3" />
              </Glyph>
            </IconButton>
            <Triangle dir="down" />
          </ZoomTools>
        </BottomRow>

        <Banner>
          무엇이든 물어보세요
          <Glyph size={14}>
            <path d="M1 10l6-6 6 6" stroke="#bcd3ff" />
          </Glyph>
        </Banner>
      </Window>
    </>
  );
}
